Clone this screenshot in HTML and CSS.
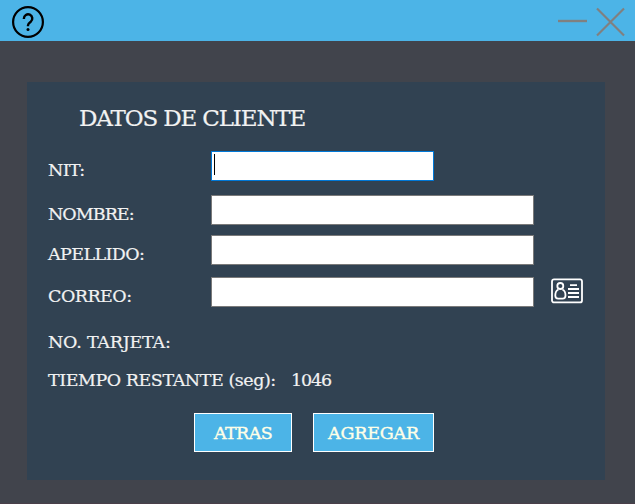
FILE: index.html
```
<!DOCTYPE html>
<html lang="es">
<head>
<meta charset="utf-8">
<title>Datos de cliente</title>
<link rel="stylesheet" href="styles.css">
</head>
<body>
<header class="titlebar">
  <svg class="help" width="34" height="34" viewBox="0 0 34 34" fill="none" stroke="#000">
    <circle cx="17" cy="17" r="14.9" stroke-width="2.2"/>
    <path d="M12.9 14v-.5a4.200 4.200 0 1 1 6.900 3.200c-1.500 1.100-2.800 1.900-2.800 3.600v1" stroke-width="2.4"/>
    <circle cx="17" cy="24.6" r="1.5" fill="#000" stroke="none"/>
  </svg>
  <div class="controls">
    <svg width="29" height="30" viewBox="0 0 29 30"><path d="M0 14h29" stroke="#808080" stroke-width="2.4"/></svg>
    <svg width="29" height="30" viewBox="0 0 29 30"><path d="M1 1.5 28 28.5M28 1.5 1 28.5" stroke="#808080" stroke-width="2.2"/></svg>
  </div>
</header>
<main class="panel">
  <h1><span>DATOS DE CLIENTE</span></h1>
  <div class="row nit"><span class="label l-nit">NIT:</span><div class="field short focused"><i class="caret"></i></div></div>
  <div class="row nombre"><span class="label l-nombre">NOMBRE:</span><div class="field"></div></div>
  <div class="row apellido"><span class="label l-apellido">APELLIDO:</span><div class="field"></div></div>
  <div class="row correo"><span class="label l-correo">CORREO:</span><div class="field"></div>
    <svg class="card" width="32" height="26" viewBox="0 0 32 26" fill="none" stroke="#fff" stroke-width="1.8">
      <rect x="1" y="1.4" width="30" height="23" rx="2"/>
      <circle cx="9.3" cy="8" r="3"/>
      <path d="M7.400 11.500c-2 .9-3.100 3.300-3.100 6 0 2.200 1.100 3.200 2.900 3.200h4.400c1.800 0 2.900-1 2.900-3.200 0-2.700-1.100-5.100-3.100-6"/>
      <path d="M19 7.2h7M17 11h11M17 15h11M17 19h11"/>
    </svg>
  </div>
  <div class="row tarjeta"><span class="label l-tarjeta">NO. TARJETA:</span></div>
  <div class="row tiempo"><span class="label l-tiempo">TIEMPO RESTANTE (seg):</span><span class="label seconds">1046</span></div>
  <div class="actions"><button class="back"><span>ATRAS</span></button><button class="add"><span>AGREGAR</span></button></div>
</main>
</body>
</html>
```
FILE: styles.css
```
* { box-sizing: border-box; }
body {
  margin: 0;
  height: 504px;
  overflow: hidden;
  background: #41444c;
  color: #f2f2f2;
  font-family: "DejaVu Serif", serif;
  -webkit-text-stroke: 0.2px currentColor;
  border-bottom: 1px solid #493f49;
}
.titlebar {
  height: 41px;
  padding: 5px 10px 0 11px;
  display: flex;
  justify-content: space-between;
  background: #4cb4e7;
}
.controls { display: flex; gap: 9px; padding-top: 2px; }
.panel {
  width: 578px;
  height: 398px;
  margin: 41px 0 0 27px;
  padding: 21px 0 0 21px;
  background: #314252;
}
h1 {
  margin: 0 0 18px 31px;
  height: 30px;
  font-size: 23px;
  font-weight: 400;
  line-height: 30px;
  letter-spacing: -1.15px;
  white-space: nowrap;
}
.row { display: flex; height: 30px; }
.nombre { margin-top: 14px; }
.apellido { margin-top: 10px; }
.correo { margin-top: 12px; }
.tarjeta { margin-top: 16px; }
.tiempo { margin-top: 8px; }
.label {
  width: 163px;
  font-size: 17.5px;
  line-height: 30px;
  padding-top: 4px;
  white-space: nowrap;
}
.l-nit { letter-spacing: -0.65px; }
.l-nombre { letter-spacing: -0.95px; }
.l-apellido { letter-spacing: -0.6px; }
.l-correo { letter-spacing: -0.5px; }
.l-tarjeta { letter-spacing: -0.22px; }
.l-tiempo { width: 243px; letter-spacing: -0.45px; }
.seconds { width: auto; letter-spacing: -1.1px; }
.field { width: 323px; height: 30px; background: #fff; border: 1px solid #7a7a7a; }
.short { width: 223px; }
.focused { border-color: #0078d7; }
.caret { display: block; width: 1px; height: 21px; margin: 2px 0 0 2px; background: #000; }
.card { margin: 1px 0 0 17px; }
.actions { display: flex; gap: 21px; margin: 18px 0 0 146px; padding-top: 4px; }
button {
  height: 39px;
  padding: 0;
  border: 1px solid #fff;
  background: #4cb4e7;
  color: #ffffe8;
  font: inherit;
  font-size: 17.5px;
  white-space: nowrap;
  -webkit-text-stroke: 0.4px currentColor;
}
.back { width: 98px; letter-spacing: -0.6px; }
.add { width: 121px; letter-spacing: -0.2px; }
```
